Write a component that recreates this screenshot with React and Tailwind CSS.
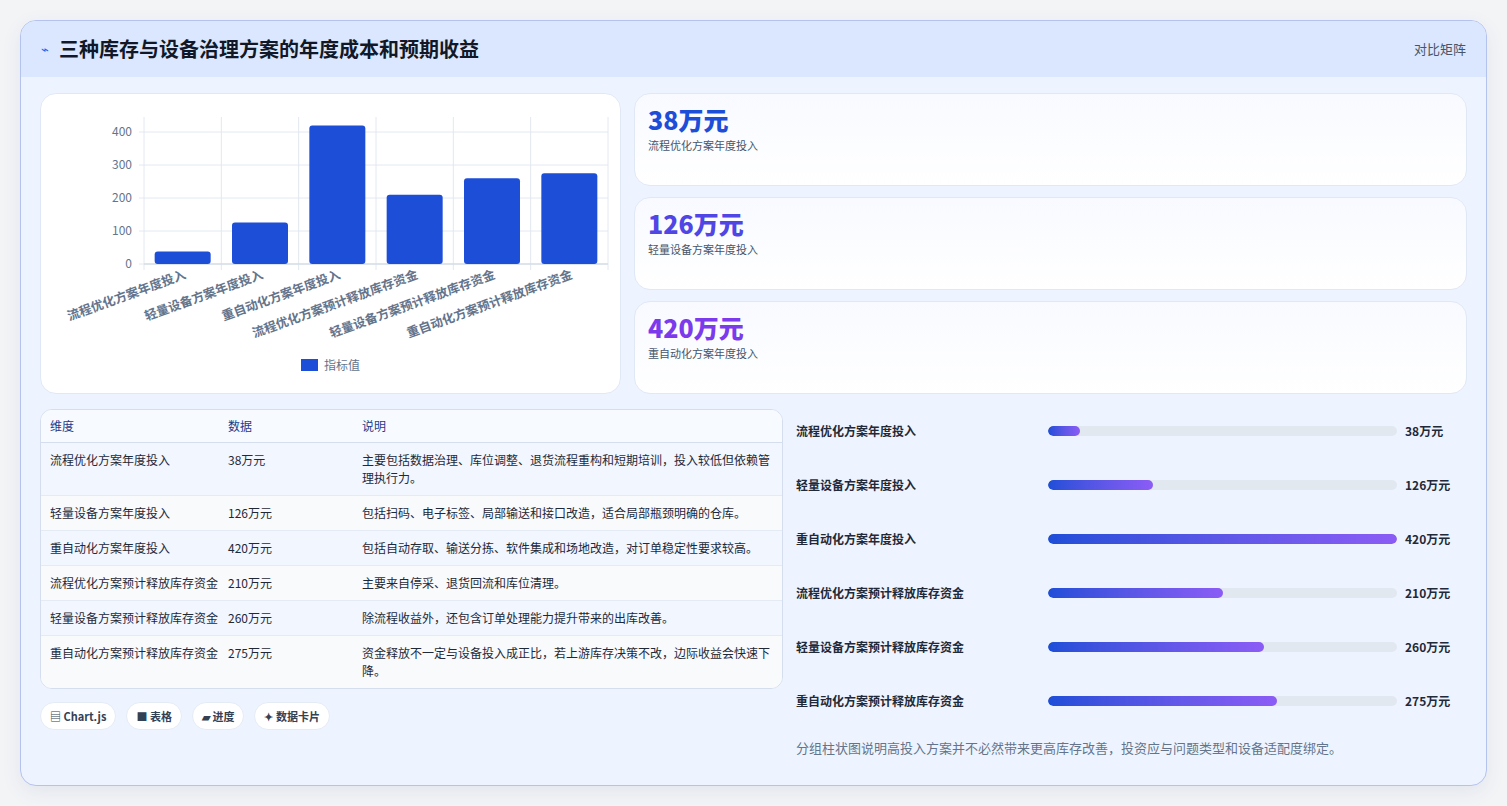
const F = { fontFamily: '"Noto Sans CJK SC","Noto Sans",sans-serif' };
const bars = [
  ["流程优化方案年度投入", 38],
  ["轻量设备方案年度投入", 126],
  ["重自动化方案年度投入", 420],
  ["流程优化方案预计释放库存资金", 210],
  ["轻量设备方案预计释放库存资金", 260],
  ["重自动化方案预计释放库存资金", 275],
];
const rows = [
  ["流程优化方案年度投入", "38万元", "主要包括数据治理、库位调整、退货流程重构和短期培训，投入较低但依赖管理执行力。"],
  ["轻量设备方案年度投入", "126万元", "包括扫码、电子标签、局部输送和接口改造，适合局部瓶颈明确的仓库。"],
  ["重自动化方案年度投入", "420万元", "包括自动存取、输送分拣、软件集成和场地改造，对订单稳定性要求较高。"],
  ["流程优化方案预计释放库存资金", "210万元", "主要来自停采、退货回流和库位清理。"],
  ["轻量设备方案预计释放库存资金", "260万元", "除流程收益外，还包含订单处理能力提升带来的出库改善。"],
  ["重自动化方案预计释放库存资金", "275万元", "资金释放不一定与设备投入成正比，若上游库存决策不改，边际收益会快速下降。"],
];

function Chart() {
  const x0 = 103, x1 = 567, yb = 170, s = 0.33, top = 23;
  const cw = (x1 - x0) / 6;
  return (
    <svg width="580" height="300" viewBox="0 0 580 300" style={F}>
      {[0, 100, 200, 300, 400].map((v) => (
        <g key={v}>
          <line x1={x0 - 5} x2={x1} y1={yb - v * s} y2={yb - v * s} stroke="#e2e8f0" />
          <text x={x0 - 12} y={yb - v * s + 4} textAnchor="end" fontSize="12" fill="#64748b">{v}</text>
        </g>
      ))}
      {[0, 1, 2, 3, 4, 5, 6].map((i) => (
        <line key={i} x1={x0 + i * cw} x2={x0 + i * cw} y1={top} y2={yb + 6} stroke="#e2e8f0" />
      ))}
      <line x1={x0} x2={x1} y1={yb} y2={yb} stroke="#cbd5e1" />
      {bars.map(([l, v], i) => {
        const cx = x0 + cw * i + cw / 2;
        const tx = cx + 4, ty = yb + 14;
        return (
          <g key={l}>
            <rect x={cx - 28} y={yb - v * s} width="56" height={v * s} rx="3" fill="#1d4ed8" />
            <text x={tx} y={ty} textAnchor="end" fontSize="12.5" fontWeight="600" fill="#64748b" transform={`rotate(-20 ${tx} ${ty})`}>{l}</text>
          </g>
        );
      })}
      <rect x="260" y="265" width="17" height="12" fill="#1d4ed8" />
      <text x="283" y="276" fontSize="12" fill="#64748b">指标值</text>
    </svg>
  );
}

function Kpi({ v, l, c }) {
  return (
    <div className="h-[93px] rounded-2xl border border-[#e0e8f6] bg-gradient-to-b from-[#f8faff] to-white px-[13px] pt-[8px]">
      <div className={`text-[25px] font-extrabold leading-[34px] ${c}`}>{v}</div>
      <div className="text-[11px] text-[#475569] mt-[1px]">{l}</div>
    </div>
  );
}

export default function App() {
  return (
    <div className="w-[1507px] h-[806px] bg-[#f3f4f6] p-[20px]" style={F}>
      <div className="h-[766px] rounded-2xl border border-[#b4c2ee] bg-[#eef4ff] overflow-hidden shadow-[0_6px_20px_rgba(30,58,138,0.08)]">
        <div className="h-[56px] bg-[#dbe7fe] flex items-center justify-between px-[20px]">
          <div className="flex items-center gap-[10px]">
            <span className="text-[#2563eb] text-[13px]">⌁</span>
            <span className="text-[20px] font-bold text-[#111827]">三种库存与设备治理方案的年度成本和预期收益</span>
          </div>
          <span className="text-[13px] text-[#475569]">对比矩阵</span>
        </div>
        <div className="px-[19px] pt-[16px]">
          <div className="flex gap-[13px]">
            <div className="w-[581px] h-[301px] rounded-2xl border border-[#e0e8f6] bg-white overflow-hidden">
              <Chart />
            </div>
            <div className="flex-1 flex flex-col gap-[11px]">
              <Kpi v="38万元" l="流程优化方案年度投入" c="text-[#1d4ed8]" />
              <Kpi v="126万元" l="轻量设备方案年度投入" c="text-[#4f46e5]" />
              <Kpi v="420万元" l="重自动化方案年度投入" c="text-[#7c3aed]" />
            </div>
          </div>
          <div className="flex gap-[13px] mt-[15px]">
            <div className="w-[743px]">
              <div className="rounded-xl border border-[#d5deee] overflow-hidden bg-white">
                <div className="flex h-[33px] items-center text-[12px] text-[#1e3a8a] border-b border-[#d5deee] bg-[#f7faff]">
                  <div className="w-[187px] pl-[9px]">维度</div>
                  <div className="w-[134px]">数据</div>
                  <div>说明</div>
                </div>
                {rows.map((r, i) => (
                  <div key={i} className={`flex text-[12px] text-[#1f2937] leading-[18px] pt-[8px] pb-[8px] border-b border-[#e5ebf5] last:border-b-0 ${i % 2 === 0 ? "bg-[#f1f6ff]" : "bg-[#f8fafc]"}`}>
                    <div className="w-[187px] pl-[9px] pr-[10px]">{r[0]}</div>
                    <div className="w-[134px]">{r[1]}</div>
                    <div className="flex-1 pr-[8px]">{r[2]}</div>
                  </div>
                ))}
              </div>
              <div className="flex gap-[10px] mt-[13px]">
                {["▤ Chart.js", "■ 表格", "▰ 进度", "✦ 数据卡片"].map((t) => (
                  <span key={t} className="h-[28px] px-[9px] rounded-full bg-white border border-[#e5ebf5] text-[11px] font-semibold text-[#334155] flex items-center">{t}</span>
                ))}
              </div>
            </div>
            <div className="flex-1 -mt-[5px]">
              {bars.map(([l, v]) => (
                <div key={l} className="h-[54px] flex items-center">
                  <div className="w-[252px] text-[12px] font-semibold text-[#1f2937]">{l}</div>
                  <div className="w-[349px] h-[10px] rounded-full bg-[#e2e8f0] overflow-hidden">
                    <div className="h-full rounded-full bg-gradient-to-r from-[#1d4ed8] to-[#8b5cf6]" style={{ width: `${(v / 420) * 100}%` }} />
                  </div>
                  <div className="pl-[8px] text-[12px] font-bold text-[#1f2937]">{v}万元</div>
                </div>
              ))}
              <div className="mt-[10px] text-[13px] text-[#64748b]">分组柱状图说明高投入方案并不必然带来更高库存改善，投资应与问题类型和设备适配度绑定。</div>
            </div>
          </div>
        </div>
      </div>
    </div>
  );
}
